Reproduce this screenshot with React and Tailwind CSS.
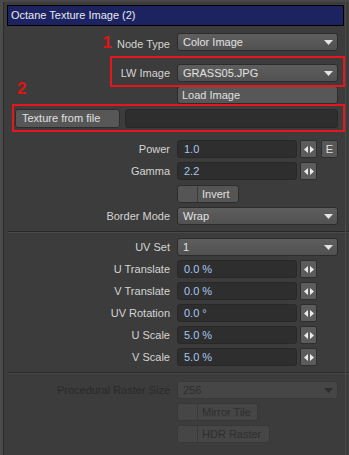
import React from 'react'

function Tri({ color = '#e4e4e4' }) {
  return (
    <svg width="9" height="5" viewBox="0 0 9 5">
      <path d="M0 0H9L4.5 5Z" fill={color} />
    </svg>
  )
}

function Arrows() {
  return (
    <div className="flex h-[18px] w-[17px] shrink-0 items-center justify-center rounded-[2px] border border-[#2e2e2e] bg-[#5c5c5c]">
      <svg width="10" height="7" viewBox="0 0 10 7">
        <path d="M0 3.5L4 0V7Z M10 3.5L6 0V7Z" fill="#ececec" />
      </svg>
    </div>
  )
}

function Label({ children, disabled }) {
  return (
    <div className={`w-[167px] shrink-0 text-right ${disabled ? 'text-[#2a2a2a]' : 'text-[#d4d4d4]'}`}>
      {children}
    </div>
  )
}

function Select({ value, disabled }) {
  return (
    <div
      className={`flex h-[18px] w-[161px] items-center justify-between rounded-[3px] border pl-[5px] pr-[4px] ${
        disabled
          ? 'border-[#383838] bg-[#464646] text-[#2e2e2e]'
          : 'border-[#2c2c2c] bg-gradient-to-b from-[#5e5e5e] to-[#515151] text-[#e2e2e2]'
      }`}
    >
      <span>{value}</span>
      <Tri color={disabled ? '#2e2e2e' : '#e4e4e4'} />
    </div>
  )
}

function NumField({ value, extra }) {
  return (
    <div className="flex items-center">
      <div className="flex h-[18px] w-[120px] items-center rounded-[3px] border border-[#282828] bg-[#2e2e2e] pl-[6px] text-[#a9c6ee]">
        {value}
      </div>
      <div className="ml-[3px]">
        <Arrows />
      </div>
      {extra && (
        <div className="ml-[4px] flex h-[18px] w-[17px] items-center justify-center rounded-[2px] border border-[#2e2e2e] bg-[#575757] text-[#e2e2e2]">
          E
        </div>
      )}
    </div>
  )
}

function Toggle({ label, width, disabled }) {
  return (
    <div
      className={`flex h-[18px] items-stretch rounded-[3px] border ${width} ${
        disabled ? 'border-[#383838] bg-[#464646] text-[#2e2e2e]' : 'border-[#2c2c2c] bg-[#555555] text-[#e0e0e0]'
      }`}
    >
      <div className="w-[20px] border-r border-[#3a3a3a]" />
      <div className="flex items-center pl-[4px]">{label}</div>
    </div>
  )
}

function Row({ label, children, disabled, className = '' }) {
  return (
    <div className={`flex h-[18px] items-center gap-[7px] ${className}`}>
      <Label disabled={disabled}>{label}</Label>
      {children}
    </div>
  )
}

function Sep({ className = '' }) {
  return <div className={`ml-[5px] border-t border-b border-t-[#282828] border-b-[#4a4a4a] ${className}`} />
}

export default function App() {
  return (
    <div className="relative h-[455px] w-[349px] overflow-hidden border-l-[3px] border-t-[2px] border-l-[#4b4b4b] border-t-[#484848] bg-[#3c3c3c] font-['Liberation_Sans',Arial,sans-serif] text-[11px] leading-none">
      <div className="absolute inset-y-0 left-0 w-px bg-[#2c2c2c]" />
      <div className="absolute inset-y-0 right-[3px] w-px bg-[#4a4a4a]" />

      <div className="ml-[4px] mr-[5px] mt-[3px] flex h-[21px] items-center border border-black bg-[#1d2361] pl-[3px] text-[#e6e8f2]">
        Octane Texture Image (2)
      </div>

      <div className="flex flex-col">
        <Row
          className="mt-[7px]"
          label={
            <span>
              <span className="mr-[5px] text-[17px] font-bold text-[#e01414]">1</span>
              Node Type
            </span>
          }
        >
          <Select value="Color Image" />
        </Row>

        <Row className="mt-[13px]" label="LW Image">
          <Select value="GRASS05.JPG" />
        </Row>

        <Row className="mt-[4px]" label="">
          <div className="flex h-[18px] w-[161px] items-center rounded-[3px] border border-[#2c2c2c] bg-[#575757] pl-[4px] text-[#e0e0e0]">
            Load Image
          </div>
        </Row>

        <div className="mt-[4px] flex h-[20px] items-center pl-[12px]">
          <div className="flex h-[19px] w-[105px] items-center rounded-[3px] border border-[#2c2c2c] bg-[#575757] pl-[6px] text-[#e0e0e0]">
            Texture from file
          </div>
          <div className="ml-[5px] h-[19px] w-[213px] rounded-[3px] border border-[#282828] bg-[#2e2e2e]" />
        </div>

        <Row className="mt-[12px]" label="Power">
          <NumField value="1.0" extra />
        </Row>
        <Row className="mt-[4px]" label="Gamma">
          <NumField value="2.2" />
        </Row>
        <Row className="mt-[5px]" label="">
          <Toggle label="Invert" width="w-[62px]" />
        </Row>
        <Row className="mt-[4px]" label="Border Mode">
          <Select value="Wrap" />
        </Row>

        <Sep className="mt-[6px]" />

        <Row className="mt-[5px]" label="UV Set">
          <Select value="1" />
        </Row>
        <Row className="mt-[4px]" label="U Translate">
          <NumField value="0.0 %" />
        </Row>
        <Row className="mt-[4px]" label="V Translate">
          <NumField value="0.0 %" />
        </Row>
        <Row className="mt-[4px]" label="UV Rotation">
          <NumField value="0.0 °" />
        </Row>
        <Row className="mt-[4px]" label="U Scale">
          <NumField value="5.0 %" />
        </Row>
        <Row className="mt-[4px]" label="V Scale">
          <NumField value="5.0 %" />
        </Row>

        <Sep className="mt-[6px]" />

        <Row className="mt-[7px]" label="Procedural Raster Size" disabled>
          <Select value="256" disabled />
        </Row>
        <Row className="mt-[4px]" label="" disabled>
          <Toggle label="Mirror Tile" width="w-[81px]" disabled />
        </Row>
        <Row className="mt-[4px]" label="" disabled>
          <Toggle label="HDR Raster" width="w-[93px]" disabled />
        </Row>
      </div>

      <div className="absolute left-[107px] top-[54px] h-[31px] w-[235px] border-2 border-[#e6161c]" />
      <div className="absolute left-[9px] top-[102px] h-[28px] w-[333px] border-2 border-[#e6161c]" />
      <div className="absolute left-[14px] top-[78px] text-[17px] font-bold leading-none text-[#e01414]">2</div>
    </div>
  )
}
